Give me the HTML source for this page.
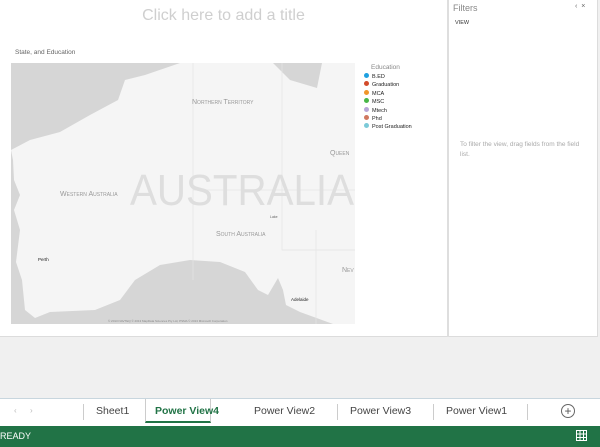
<!DOCTYPE html>
<html><head><style>
*{margin:0;padding:0;box-sizing:border-box}
body{width:600px;height:447px;overflow:hidden;background:#f0f0f0;font-family:"Liberation Sans",sans-serif;position:relative}
.abs{position:absolute}
.tab{position:absolute;top:405px;font-size:10.5px;color:#444}
</style></head><body>
<div class="abs" style="left:0;top:0;width:598px;height:337px;background:#fff;border-bottom:1px solid #dcdcdc;border-right:1px solid #dcdcdc"></div>
<div class="abs" style="left:447px;top:0;width:2px;height:337px;background:#dedede"></div>
<div class="abs" style="left:0;top:7px;width:447px;text-align:center;font-size:16px;color:#cfcfcf">Click here to add a title</div>
<div class="abs" style="left:15px;top:49px;font-size:6.5px;color:#666">State, and Education</div>
<svg class="abs" style="left:11px;top:63px" width="344" height="261" viewBox="11 63 344 261">
<rect x="11" y="63" width="344" height="261" fill="#d6d6d6"/>
<path d="M180 63 L273 63 L290 80 L317 88 L322 63 L355 63 L355 324 L333 324 L300 312 L286 305 L283 290 L278 278 L268 295 L258 290 L245 272 L220 262 L190 260 L160 265 L135 280 L120 300 L95 310 L50 312 L35 318 L25 310 L22 280 L16 262 L20 230 L14 210 L20 195 L14 180 L13 160 L11 150 L30 140 L60 132 L90 115 L118 100 L125 80 L145 75 Z" fill="#f5f5f5"/>
<g stroke="#e4e4e4" stroke-width="0.7" fill="none">
<path d="M193 63 V280"/><path d="M193 190 H355"/><path d="M282 63 V250 H355"/><path d="M316 230 V324"/>
</g>
<g font-family="Liberation Sans" font-size="7" fill="#999" style="font-variant:small-caps">
<text x="192" y="104">Northern Territory</text>
<text x="60" y="196">Western Australia</text>
<text x="216" y="236">South Australia</text>
<text x="330" y="155">Queen</text>
<text x="342" y="272">Nev</text>
</g>
<text x="130" y="205" font-size="44" fill="#dedede" font-family="Liberation Sans" textLength="224" lengthAdjust="spacingAndGlyphs">AUSTRALIA</text>
<text x="38" y="261" font-size="4.5" fill="#222">Perth</text>
<text x="291" y="301" font-size="4.5" fill="#222">Adelaide</text>
<text x="270" y="218" font-size="3.5" fill="#666">Lake</text>
<text x="108" y="322" font-size="3" fill="#888">© 2013 NAVTEQ © 2013 MapData Sciences Pty Ltd, PSMA © 2013 Microsoft Corporation</text>
</svg>
<div class="abs" style="left:371px;top:64px;font-size:6.5px;color:#888">Education</div>
<div class="abs" style="left:364px;top:73px;font-size:5.5px;color:#222;line-height:8.4px">
<div><span style="display:inline-block;width:5px;height:5px;border-radius:50%;background:#1fa0e0;margin-right:3px"></span>B.ED</div>
<div><span style="display:inline-block;width:5px;height:5px;border-radius:50%;background:#d34b2b;margin-right:3px"></span>Graduation</div>
<div><span style="display:inline-block;width:5px;height:5px;border-radius:50%;background:#f0962a;margin-right:3px"></span>MCA</div>
<div><span style="display:inline-block;width:5px;height:5px;border-radius:50%;background:#48b648;margin-right:3px"></span>MSC</div>
<div><span style="display:inline-block;width:5px;height:5px;border-radius:50%;background:#b8a6d8;margin-right:3px"></span>Mtech</div>
<div><span style="display:inline-block;width:5px;height:5px;border-radius:50%;background:#d07860;margin-right:3px"></span>Phd</div>
<div><span style="display:inline-block;width:5px;height:5px;border-radius:50%;background:#7ccad8;margin-right:3px"></span>Post Graduation</div>
</div>
<div class="abs" style="left:453px;top:3px;font-size:9px;color:#888">Filters</div>
<div class="abs" style="left:575px;top:3px;font-size:7px;color:#666">‹ &nbsp;×</div>
<div class="abs" style="left:455px;top:20px;font-size:5.5px;color:#333">VIEW</div>
<div class="abs" style="left:460px;top:140px;width:130px;font-size:6.5px;color:#aaa;line-height:10px">To filter the view, drag fields from the field list.</div>
<div class="abs" style="left:0;top:398px;width:600px;height:28px;background:#fff;border-top:1px solid #c8d6de"></div>
<div class="abs" style="left:14px;top:406px;font-size:8px;color:#bbb">‹ &nbsp;&nbsp;&nbsp;&nbsp; ›</div>
<div class="abs" style="left:83px;top:404px;width:1px;height:16px;background:#ccc"></div>
<div class="tab" style="left:96px">Sheet1</div>
<div class="abs" style="left:145px;top:399px;width:66px;height:24px;background:#fff;border-bottom:2px solid #217346;border-left:1px solid #ccc;border-right:1px solid #ccc"></div>
<div class="tab" style="left:155px;color:#217346;font-weight:bold">Power View4</div>
<div class="tab" style="left:254px">Power View2</div>
<div class="abs" style="left:337px;top:404px;width:1px;height:16px;background:#ccc"></div>
<div class="tab" style="left:350px">Power View3</div>
<div class="abs" style="left:433px;top:404px;width:1px;height:16px;background:#ccc"></div>
<div class="tab" style="left:446px">Power View1</div>
<div class="abs" style="left:527px;top:404px;width:1px;height:16px;background:#ccc"></div>
<div class="abs" style="left:561px;top:404px;width:14px;height:14px;border:1px solid #666;border-radius:50%;text-align:center;font-size:12px;line-height:12px;color:#555">+</div>
<div class="abs" style="left:0;top:426px;width:600px;height:21px;background:#217346"></div>
<div class="abs" style="left:0;top:431px;font-size:9px;color:#fff">READY</div>
<svg class="abs" style="left:576px;top:430px" width="11" height="11"><g stroke="#fff" stroke-width="1" fill="none"><rect x="0.5" y="0.5" width="10" height="10"/><path d="M4 0V11M7.5 0V11M0 4H11M0 7.5H11"/></g></svg>
</body></html>
